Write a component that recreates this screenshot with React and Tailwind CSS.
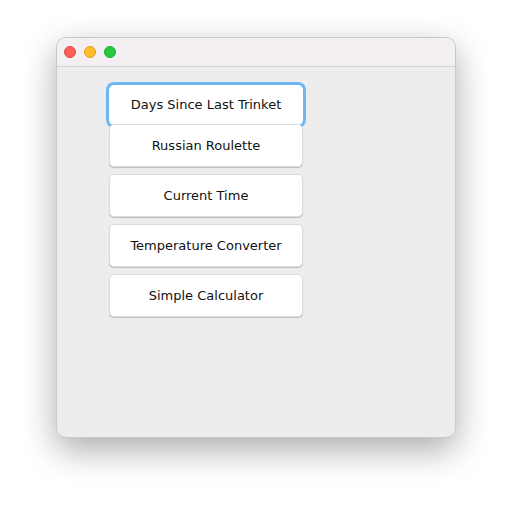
export default function App() {
  const items = ["Russian Roulette", "Current Time", "Temperature Converter", "Simple Calculator"];
  return (
    <div className="w-[512px] h-[512px] bg-white pt-[37px] pl-[56px]" style={{ fontFamily: '"DejaVu Sans", sans-serif' }}>
      <div className="w-[400px] h-[401px] rounded-[10px] bg-[#ededed] overflow-hidden border border-[#c9c9c9] shadow-[0_12px_34px_rgba(0,0,0,0.33)] flex flex-col">
        <div className="h-[29px] bg-[#f4eff0] border-b border-[#d6d3d3] flex items-center gap-2 pl-[7px]">
          <span className="w-3 h-3 rounded-full bg-[#fe5f57] border-[0.5px] border-[#e2463f]" />
          <span className="w-3 h-3 rounded-full bg-[#febc2e] border-[0.5px] border-[#e1a116]" />
          <span className="w-3 h-3 rounded-full bg-[#28c840] border-[0.5px] border-[#14ae2c]" />
        </div>
        <div className="flex flex-col pt-[18px] pl-[52px]">
          <button className="relative z-0 w-[194px] h-[40px] -mb-[1px] rounded-[5px] bg-white text-[13px] text-[#111] ring-[3px] ring-[#6db8f4]">
            Days Since Last Trinket
          </button>
          {items.map((label, i) => (
            <button
              key={label}
              className={`relative z-10 w-[194px] h-[43px] rounded-[5px] bg-white text-[13px] text-[#111] border-[0.5px] border-[#dcdcdc] shadow-[0_1px_1px_rgba(0,0,0,0.2)] ${i === 0 ? "mt-0" : "mt-[7px]"}`}
            >
              {label}
            </button>
          ))}
        </div>
      </div>
    </div>
  );
}
